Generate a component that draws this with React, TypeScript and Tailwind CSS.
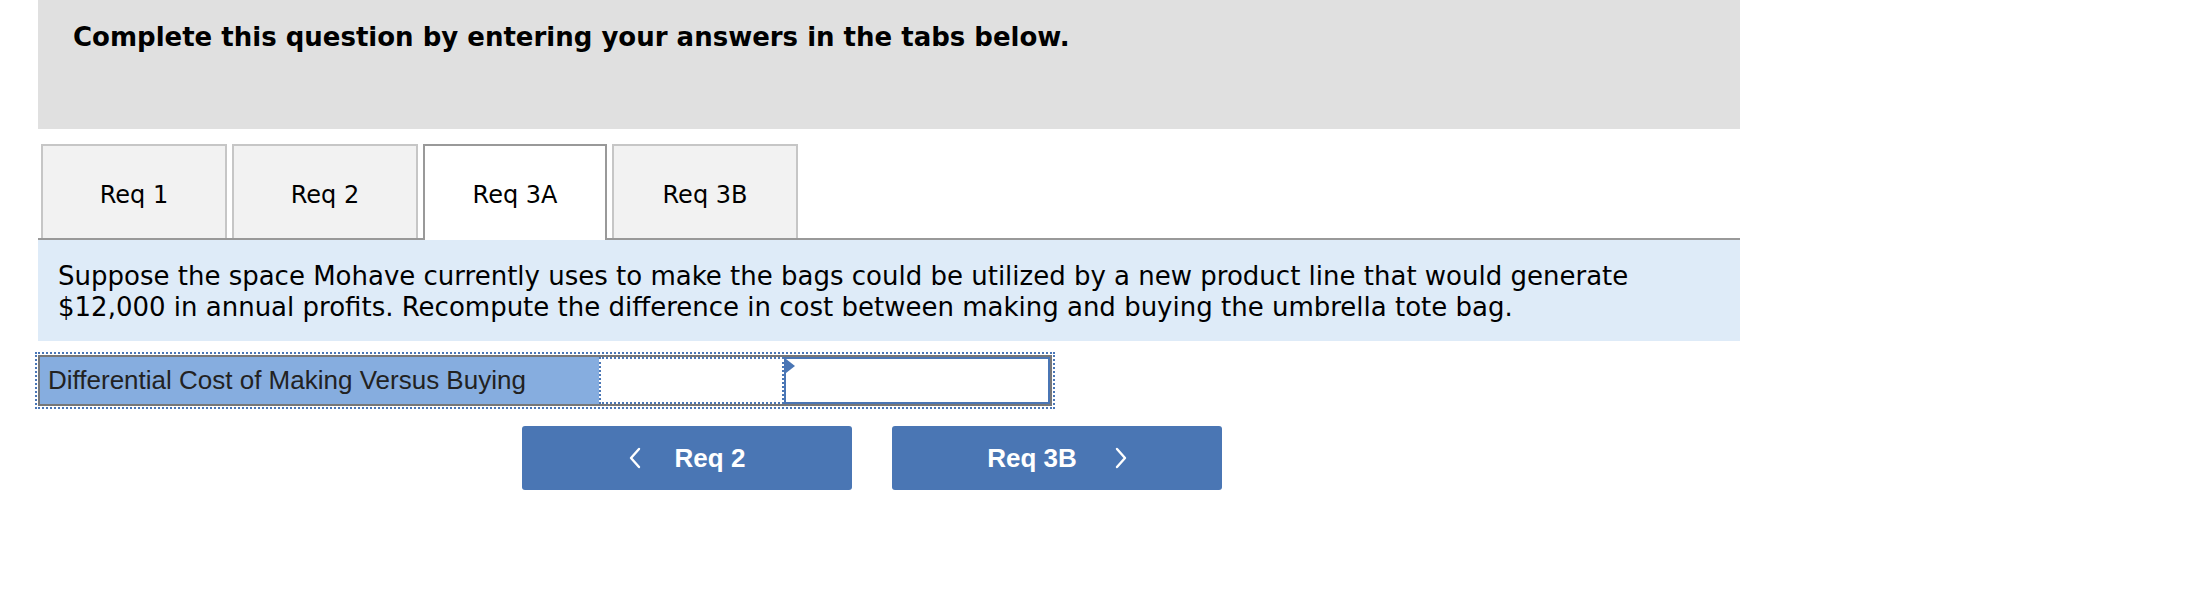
import React from "react";

const tabs = ["Req 1", "Req 2", "Req 3A", "Req 3B"];

const Chevron = ({ dir }: { dir: "left" | "right" }) => (
  <svg width="12" height="22" viewBox="0 0 12 22" fill="none">
    <polyline
      points={dir === "left" ? "10,2 2,11 10,20" : "2,2 10,11 2,20"}
      stroke="white"
      strokeWidth="2.4"
      strokeLinecap="round"
      strokeLinejoin="round"
    />
  </svg>
);

export default function App() {
  const active = "Req 3A";

  return (
    <div className="w-[2202px] h-[598px] bg-white" style={{ fontFamily: '"DejaVu Sans", Verdana, sans-serif' }}>
      <div className="ml-[38px] w-[1702px]">
        {/* header */}
        <div className="h-[129px] bg-[#e0e0e0] pl-[35px] pt-[22px]">
          <h2 className="text-[26px] leading-[31px] font-bold text-black">
            Complete this question by entering your answers in the tabs below.
          </h2>
        </div>

        {/* tabs */}
        <div className="mt-[15px] flex items-end gap-[5px] pl-[3px] border-b-2 border-[#999] h-[96px]">
          {tabs.map((t) =>
            t === active ? (
              <div
                key={t}
                className="relative z-10 -mb-[2px] w-[184px] h-[96px] bg-white border-2 border-b-0 border-[#999] flex items-center justify-center pt-[4px] text-[24px] leading-[29px] text-black"
              >
                {t}
              </div>
            ) : (
              <div
                key={t}
                className="w-[186px] h-[94px] bg-[#f2f2f2] border-2 border-b-0 border-[#c6c6c6] flex items-center justify-center pt-[6px] text-[24px] leading-[29px] text-black"
              >
                {t}
              </div>
            )
          )}
        </div>

        {/* question text */}
        <div className="h-[101px] bg-[#deebf8] pl-[20px] pt-[21px] text-[26px] leading-[31px] text-black">
          Suppose the space Mohave currently uses to make the bags could be utilized by a new product line that would generate
          <br />
          $12,000 in annual profits. Recompute the difference in cost between making and buying the umbrella tote bag.
        </div>

        {/* answer row */}
        <div className="mt-[11px] -ml-[3px] w-[1020px] h-[57px] border-2 border-dotted border-[#4a76b5] p-px">
          <div className="flex h-[51px] border-2 border-[#777]">
            <div
              className="w-[559px] bg-[#86addf] flex items-center pl-[8px] text-[26px] text-[#222]"
              style={{ fontFamily: '"Liberation Sans", Arial, sans-serif' }}
            >
              Differential Cost of Making Versus Buying
            </div>
            <div className="w-[185px] border-2 border-dotted border-[#4a76b5]" />
            <div className="relative flex-1 border-2 border-[#4a76b5]">
              <span className="absolute left-0 top-0 w-0 h-0 border-y-[7px] border-y-transparent border-l-[9px] border-l-[#4a76b5]" />
            </div>
          </div>
        </div>

        {/* nav buttons */}
        <div
          className="mt-[17px] pl-[484px] flex gap-[40px] text-white font-bold text-[26px]"
          style={{ fontFamily: '"Liberation Sans", Arial, sans-serif' }}
        >
          <button className="w-[330px] h-[64px] rounded-[3px] bg-[#4a76b4] flex items-center justify-center gap-[34px]">
            <Chevron dir="left" />
            <span>Req 2</span>
          </button>
          <button className="w-[330px] h-[64px] rounded-[3px] bg-[#4a76b4] flex items-center justify-center gap-[38px]">
            <span>Req 3B</span>
            <Chevron dir="right" />
          </button>
        </div>
      </div>
    </div>
  );
}
